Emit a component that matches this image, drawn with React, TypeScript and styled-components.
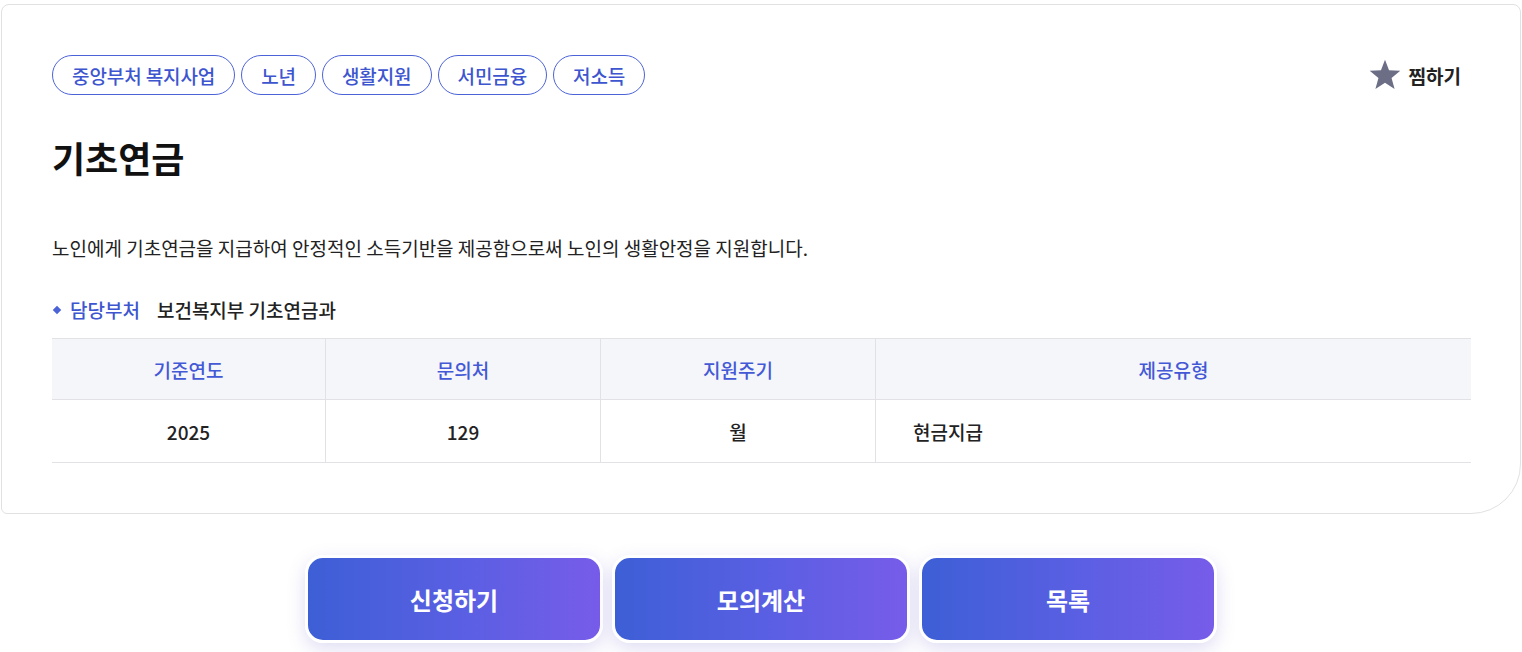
import React from "react";
import styled, { createGlobalStyle } from "styled-components";

const GlobalStyle = createGlobalStyle`
  body {
    margin: 0;
    background: #ffffff;
    font-family: "Noto Sans CJK KR", "Noto Sans", sans-serif;
    color: #222;
  }
`;

const Page = styled.div`
  padding-top: 4px;
  height: 648px;
  overflow: hidden;
`;

const Card = styled.section`
  margin: 0 1px 0 1px;
  border: 1px solid #e1e1e1;
  border-radius: 8px 8px 50px 6px;
  padding: 50px 49px 50px 50px;
  background: #fff;
`;

const TopRow = styled.div`
  display: flex;
  align-items: center;
  justify-content: space-between;
`;

const Tags = styled.div`
  display: flex;
  gap: 6px;
`;

const Tag = styled.span`
  display: inline-flex;
  align-items: center;
  height: 40px;
  box-sizing: border-box;
  padding: 0 19px;
  border: 1px solid #4c63d8;
  border-radius: 20px;
  color: #3d56cf;
  font-size: 19px;
  font-weight: 500;
  letter-spacing: -0.1px;
`;

const Bookmark = styled.button`
  display: flex;
  align-items: center;
  gap: 7px;
  margin-right: 10px;
  border: 0;
  background: none;
  padding: 0;
  font-family: inherit;
  font-size: 19px;
  font-weight: 700;
  color: #222;
  cursor: pointer;
`;

const Title = styled.h1`
  margin: 42px 0 0;
  font-size: 36px;
  line-height: 40px;
  font-weight: 700;
  color: #111;
`;

const Desc = styled.p`
  margin: 58px 0 0;
  font-size: 19px;
  line-height: 26px;
  color: #222;
`;

const Dept = styled.div`
  margin-top: 36px;
  display: flex;
  align-items: center;
  font-size: 19px;
  line-height: 26px;
  font-weight: 500;
`;

const Bullet = styled.span`
  width: 6px;
  height: 6px;
  background: #4c63d8;
  transform: rotate(45deg);
  margin: 0 10px 0 2px;
`;

const DeptLabel = styled.span`
  color: #3d56cf;
  margin-right: 17px;
`;

const DeptValue = styled.span`
  color: #222;
`;

const Table = styled.div`
  margin-top: 15px;
  display: grid;
  grid-template-columns: 274px 275px 275px 1fr;
  border-top: 1px solid #e2e2e6;
  border-bottom: 1px solid #e2e2e6;
`;

const Cell = styled.div<{ $head?: boolean; $left?: boolean; $last?: boolean }>`
  display: flex;
  align-items: center;
  justify-content: ${(p) => (p.$left ? "flex-start" : "center")};
  padding-left: ${(p) => (p.$left ? "37px" : "0")};
  height: ${(p) => (p.$head ? "60px" : "62px")};
  background: ${(p) => (p.$head ? "#f5f6fa" : "#fff")};
  color: ${(p) => (p.$head ? "#4459d6" : "#222")};
  font-size: 19px;
  font-weight: 500;
  border-right: ${(p) => (p.$last ? "0" : "1px solid #e2e2e6")};
  border-bottom: ${(p) => (p.$head ? "1px solid #e2e2e6" : "0")};
`;

const Actions = styled.div`
  display: flex;
  justify-content: center;
  gap: 9px;
  margin-top: 41px;
`;

const ActionButton = styled.button`
  width: 298px;
  height: 88px;
  border: 3px solid #fff;
  border-radius: 18px;
  background: linear-gradient(90deg, #3d5fd6 0%, #5b5fe3 55%, #775ce9 100%);
  box-shadow: 0 6px 18px rgba(110, 100, 200, 0.22);
  color: #fff;
  font-family: inherit;
  font-size: 24px;
  font-weight: 700;
  cursor: pointer;
`;

const StarIcon = () => (
  <svg width="34" height="32" viewBox="0 0 24 23" aria-hidden="true">
    <path
      d="M12 0.6 L14.9 8.1 L23 8.5 L16.7 13.6 L18.9 21.5 L12 17 L5.1 21.5 L7.3 13.6 L1 8.5 L9.1 8.1 Z"
      fill="#6b6e85"
    />
  </svg>
);

const tags = ["중앙부처 복지사업", "노년", "생활지원", "서민금융", "저소득"];
const heads = ["기준연도", "문의처", "지원주기", "제공유형"];
const values = ["2025", "129", "월", "현금지급"];

export default function App() {
  return (
    <Page>
      <GlobalStyle />
      <Card>
        <TopRow>
          <Tags>
            {tags.map((t) => (
              <Tag key={t}>{t}</Tag>
            ))}
          </Tags>
          <Bookmark>
            <StarIcon />
            찜하기
          </Bookmark>
        </TopRow>
        <Title>기초연금</Title>
        <Desc>
          노인에게 기초연금을 지급하여 안정적인 소득기반을 제공함으로써 노인의 생활안정을 지원합니다.
        </Desc>
        <Dept>
          <Bullet />
          <DeptLabel>담당부처</DeptLabel>
          <DeptValue>보건복지부 기초연금과</DeptValue>
        </Dept>
        <Table>
          {heads.map((h, i) => (
            <Cell key={h} $head $last={i === heads.length - 1}>
              {h}
            </Cell>
          ))}
          {values.map((v, i) => (
            <Cell key={v} $left={i === values.length - 1} $last={i === values.length - 1}>
              {v}
            </Cell>
          ))}
        </Table>
      </Card>
      <Actions>
        <ActionButton>신청하기</ActionButton>
        <ActionButton>모의계산</ActionButton>
        <ActionButton>목록</ActionButton>
      </Actions>
    </Page>
  );
}
